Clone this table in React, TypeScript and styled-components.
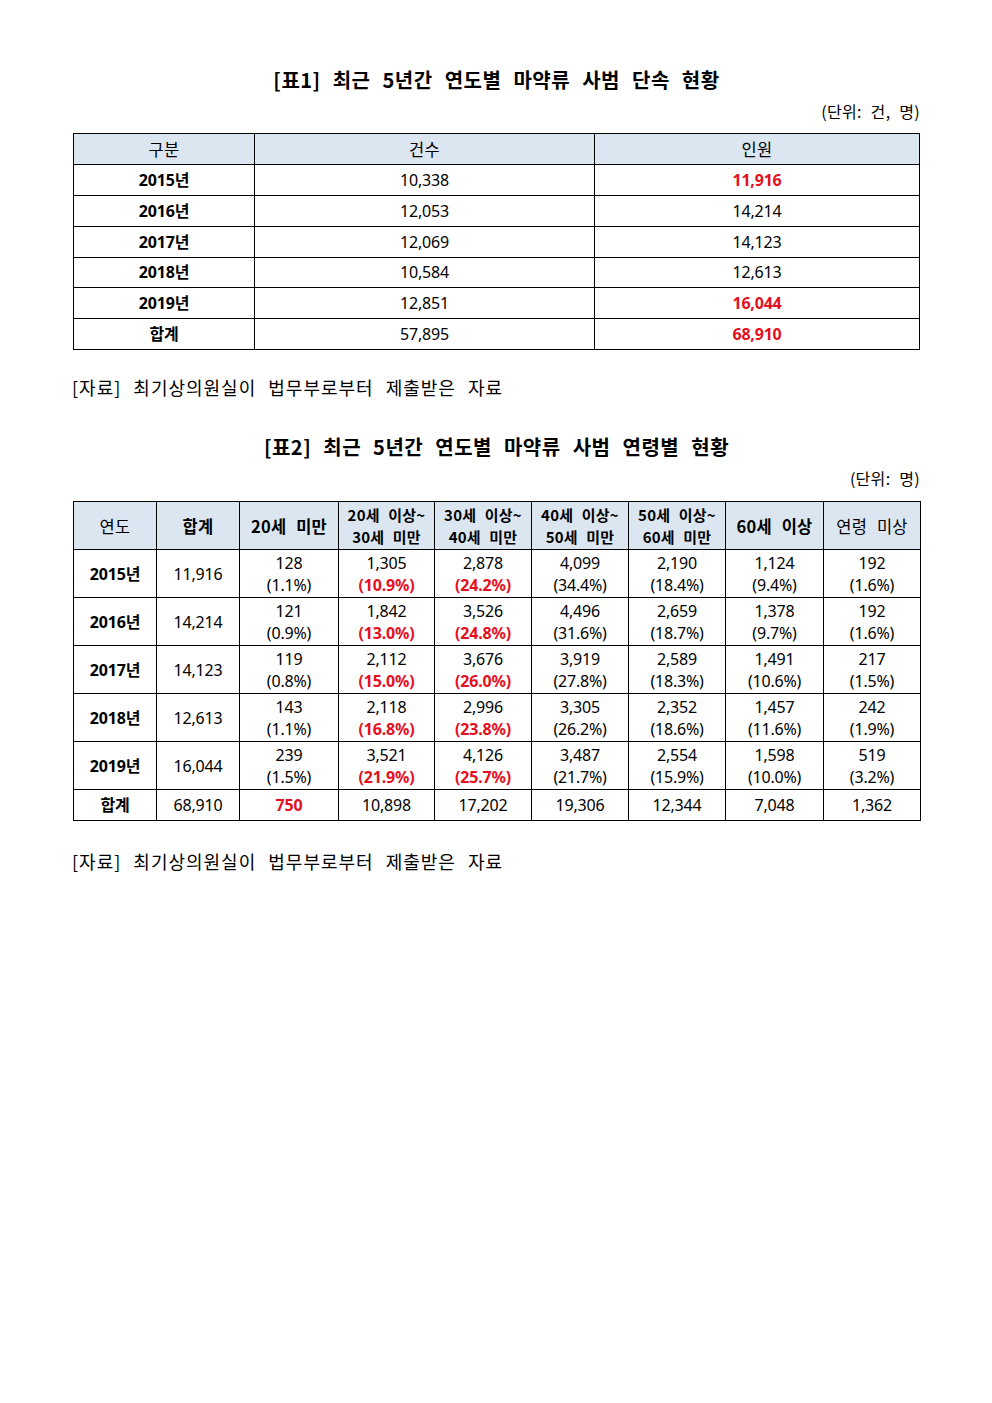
import React from "react";
import styled, { createGlobalStyle } from "styled-components";

const Global = createGlobalStyle`
  html, body { margin: 0; padding: 0; background: #fff; }
  body { font-family: "Noto Sans CJK KR", "Noto Sans", sans-serif; color: #000; }
`;

const Page = styled.div`
  width: 992px;
  box-sizing: border-box;
  padding: 64px 72px 0 73px;
  display: flex;
  flex-direction: column;
`;

const Title = styled.h2<{ $mt: number }>`
  margin: ${(p) => p.$mt}px 0 0 0;
  text-align: center;
  font-size: 20px;
  font-weight: 700;
  line-height: 32px;
  letter-spacing: 0.5px;
  word-spacing: 7px;
`;

const Unit = styled.div`
  margin-top: 1px;
  text-align: right;
  font-size: 16px;
  line-height: 28px;
  letter-spacing: 0.3px;
  word-spacing: 5px;
`;

const Table = styled.table<{ $mt: number; $w: number }>`
  margin-top: ${(p) => p.$mt}px;
  width: ${(p) => p.$w}px;
  border-collapse: collapse;
  table-layout: fixed;
  font-family: "Noto Sans", "Noto Sans CJK KR", sans-serif;
  font-size: 16px;
`;

const Th = styled.th<{ $bold?: boolean; $two?: boolean }>`
  background: #dce6f1;
  border: 1px solid #000;
  font-family: "Noto Sans CJK KR", "Noto Sans", sans-serif;
  font-size: ${(p) => (p.$two ? 15 : 16.5)}px;
  font-weight: ${(p) => (p.$bold ? 700 : 400)};
  text-align: center;
  padding: 0;
  line-height: 22px;
  word-spacing: ${(p) => (p.$two ? 5 : 6)}px;
  letter-spacing: 0.2px;
`;

const Td = styled.td<{ $bold?: boolean; $red?: boolean }>`
  border: 1px solid #000;
  text-align: center;
  padding: 0;
  line-height: 22px;
  letter-spacing: -0.2px;
  font-weight: ${(p) => (p.$bold ? 700 : 400)};
  color: ${(p) => (p.$red ? "#e60f1e" : "#000")};
`;

const Tr = styled.tr<{ $h: number }>`
  height: ${(p) => p.$h}px;
`;

const Pct = styled.span<{ $red?: boolean }>`
  display: block;
  font-weight: ${(p) => (p.$red ? 700 : 400)};
  color: ${(p) => (p.$red ? "#e60f1e" : "#000")};
`;

const Num = styled.span`
  display: block;
`;

const Source = styled.p<{ $mt: number }>`
  margin: ${(p) => p.$mt}px 0 0 -1px;
  font-size: 18px;
  line-height: 26px;
  letter-spacing: 1px;
  word-spacing: 7px;
`;

const t1 = [
  { y: "2015년", a: "10,338", b: "11,916", red: true },
  { y: "2016년", a: "12,053", b: "14,214" },
  { y: "2017년", a: "12,069", b: "14,123" },
  { y: "2018년", a: "10,584", b: "12,613" },
  { y: "2019년", a: "12,851", b: "16,044", red: true },
  { y: "합계", a: "57,895", b: "68,910", red: true },
];

type Cell = [string, string];
const t2: { y: string; total: string; cells: Cell[] }[] = [
  {
    y: "2015년",
    total: "11,916",
    cells: [["128", "(1.1%)"], ["1,305", "(10.9%)"], ["2,878", "(24.2%)"], ["4,099", "(34.4%)"], ["2,190", "(18.4%)"], ["1,124", "(9.4%)"], ["192", "(1.6%)"]],
  },
  {
    y: "2016년",
    total: "14,214",
    cells: [["121", "(0.9%)"], ["1,842", "(13.0%)"], ["3,526", "(24.8%)"], ["4,496", "(31.6%)"], ["2,659", "(18.7%)"], ["1,378", "(9.7%)"], ["192", "(1.6%)"]],
  },
  {
    y: "2017년",
    total: "14,123",
    cells: [["119", "(0.8%)"], ["2,112", "(15.0%)"], ["3,676", "(26.0%)"], ["3,919", "(27.8%)"], ["2,589", "(18.3%)"], ["1,491", "(10.6%)"], ["217", "(1.5%)"]],
  },
  {
    y: "2018년",
    total: "12,613",
    cells: [["143", "(1.1%)"], ["2,118", "(16.8%)"], ["2,996", "(23.8%)"], ["3,305", "(26.2%)"], ["2,352", "(18.6%)"], ["1,457", "(11.6%)"], ["242", "(1.9%)"]],
  },
  {
    y: "2019년",
    total: "16,044",
    cells: [["239", "(1.5%)"], ["3,521", "(21.9%)"], ["4,126", "(25.7%)"], ["3,487", "(21.7%)"], ["2,554", "(15.9%)"], ["1,598", "(10.0%)"], ["519", "(3.2%)"]],
  },
];

const totals = ["750", "10,898", "17,202", "19,306", "12,344", "7,048", "1,362"];
const widths2 = [83, 83, 99, 96, 97, 97, 97, 98, 97];

export default function App() {
  return (
    <>
      <Global />
      <Page>
        <Title $mt={0}>[표1] 최근 5년간 연도별 마약류 사범 단속 현황</Title>
        <Unit>(단위: 건, 명)</Unit>
        <Table $mt={8} $w={846}>
          <colgroup>
            <col style={{ width: 181 }} />
            <col style={{ width: 340 }} />
            <col style={{ width: 325 }} />
          </colgroup>
          <thead>
            <Tr $h={31}>
              <Th>구분</Th>
              <Th>건수</Th>
              <Th>인원</Th>
            </Tr>
          </thead>
          <tbody>
            {t1.map((r) => (
              <Tr $h={30.85} key={r.y}>
                <Td $bold>{r.y}</Td>
                <Td>{r.a}</Td>
                <Td $bold={r.red} $red={r.red}>
                  {r.b}
                </Td>
              </Tr>
            ))}
          </tbody>
        </Table>
        <Source $mt={24}>[자료] 최기상의원실이 법무부로부터 제출받은 자료</Source>

        <Title $mt={31}>[표2] 최근 5년간 연도별 마약류 사범 연령별 현황</Title>
        <Unit>(단위: 명)</Unit>
        <Table $mt={9} $w={847}>
          <colgroup>
            {widths2.map((w, i) => (
              <col key={i} style={{ width: w }} />
            ))}
          </colgroup>
          <thead>
            <Tr $h={48}>
              <Th>연도</Th>
              <Th $bold>합계</Th>
              <Th $bold>20세 미만</Th>
              <Th $bold $two>
                20세 이상~
                <br />
                30세 미만
              </Th>
              <Th $bold $two>
                30세 이상~
                <br />
                40세 미만
              </Th>
              <Th $bold $two>
                40세 이상~
                <br />
                50세 미만
              </Th>
              <Th $bold $two>
                50세 이상~
                <br />
                60세 미만
              </Th>
              <Th $bold>60세 이상</Th>
              <Th>연령 미상</Th>
            </Tr>
          </thead>
          <tbody>
            {t2.map((r) => (
              <Tr $h={48} key={r.y}>
                <Td $bold>{r.y}</Td>
                <Td>{r.total}</Td>
                {r.cells.map((c, i) => (
                  <Td key={i}>
                    <Num>{c[0]}</Num>
                    <Pct $red={i === 1 || i === 2}>{c[1]}</Pct>
                  </Td>
                ))}
              </Tr>
            ))}
            <Tr $h={31}>
              <Td $bold>합계</Td>
              <Td>68,910</Td>
              {totals.map((v, i) => (
                <Td key={i} $bold={i === 0} $red={i === 0}>
                  {v}
                </Td>
              ))}
            </Tr>
          </tbody>
        </Table>
        <Source $mt={27}>[자료] 최기상의원실이 법무부로부터 제출받은 자료</Source>
      </Page>
    </>
  );
}
